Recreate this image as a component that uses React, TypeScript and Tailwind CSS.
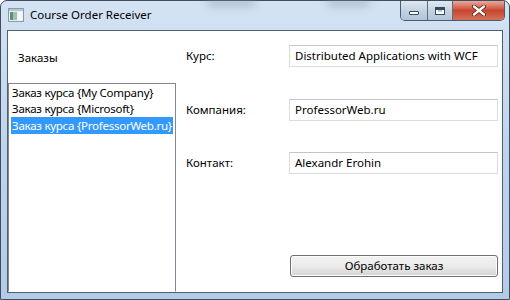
import React from "react";

const orders = [
  "Заказ курса {My Company}",
  "Заказ курса {Microsoft}",
  "Заказ курса {ProfessorWeb.ru}",
];

const fields = [
  { label: "Курс:", value: "Distributed Applications with WCF", gap: "mt-0" },
  { label: "Компания:", value: "ProfessorWeb.ru", gap: "mt-[32px]" },
  { label: "Контакт:", value: "Alexandr Erohin", gap: "mt-[31px]" },
];

function AppIcon() {
  return (
    <svg width="16" height="14" viewBox="0 0 16 14" className="shrink-0">
      <rect x="0.5" y="0.5" width="15" height="13" fill="#e8eef2" stroke="#8a9aa6" />
      <rect x="1" y="1" width="14" height="2" fill="#b8c6d0" />
      <rect x="2" y="4" width="3" height="8" fill="#5f8f7a" />
      <rect x="5" y="4" width="4" height="8" fill="#9fc2b0" />
      <rect x="10" y="4" width="4" height="8" fill="#f5f8fa" />
    </svg>
  );
}

function CaptionButtons() {
  return (
    <div className="flex h-[20px] overflow-hidden rounded-b-[5px] border border-t-0 border-[#4b5a6c] shadow-[inset_0_1px_0_rgba(255,255,255,0.6)]">
      <div className="flex w-[27px] items-center justify-center border-r border-[#5d6c7e] bg-gradient-to-b from-[#dfe8f2] via-[#c4d3e3] to-[#b1c4d9]">
        <div className="mt-[4px] h-[4px] w-[10px] rounded-[1px] border border-[#364a5e] bg-white" />
      </div>
      <div className="flex w-[25px] items-center justify-center border-r border-[#5d6c7e] bg-gradient-to-b from-[#dfe8f2] via-[#c4d3e3] to-[#b1c4d9]">
        <div className="h-[8px] w-[10px] border border-[#364a5e] bg-white shadow-[inset_0_2px_0_#364a5e]">
          <div className="mx-auto mt-[2px] h-[2px] w-[4px] bg-[#b9c9da]" />
        </div>
      </div>
      <div className="flex w-[51px] items-center justify-center bg-gradient-to-b from-[#e9a99c] via-[#c9462f] to-[#d0705a]">
        <svg width="14" height="11" viewBox="0 0 14 11">
          <path d="M2 1.5 L12 9.5 M12 1.5 L2 9.5" stroke="#5a1a10" strokeWidth="4" strokeLinecap="round" />
          <path d="M2 1.5 L12 9.5 M12 1.5 L2 9.5" stroke="#ffffff" strokeWidth="2.4" strokeLinecap="round" />
        </svg>
      </div>
    </div>
  );
}

export default function App() {
  return (
    <div className="h-[300px] w-[510px] overflow-hidden bg-white font-['Noto_Sans',sans-serif] text-[11.5px] text-black">
      <div className="relative flex h-full w-full flex-col rounded-t-[7px] border border-[#3e4d5f] bg-gradient-to-b from-[#d4e3f3] via-[#bfd4ec] to-[#b4cbe6]">
        {/* blurred desktop content behind the glass */}
        <div className="pointer-events-none absolute left-[205px] top-[-4px] h-[10px] w-[50px] rounded-full bg-[#7f93a8] opacity-40 blur-[4px]" />
        <div className="pointer-events-none absolute left-[325px] top-[-4px] h-[10px] w-[45px] rounded-full bg-[#7f93a8] opacity-40 blur-[4px]" />
        <div className="relative flex h-[29px] shrink-0 items-start">
          <div className="flex items-center gap-[6px] pl-[7px] pt-[7px]">
            <AppIcon />
            <span className="leading-[14px]">Course Order Receiver</span>
          </div>
          <div className="ml-auto mr-[4px]">
            <CaptionButtons />
          </div>
        </div>
        <div className="relative flex min-h-0 flex-1 px-[6px] pb-[6px]">
          <div className="flex flex-1 border border-[#4f5f72] bg-white">
            <div className="flex w-[168px] shrink-0 flex-col">
              <div className="flex h-[52px] items-center pl-[10px] pt-[2px]">Заказы</div>
              <div className="flex-1 border border-r-[#828790] border-t-[#828790] border-b-transparent border-l-[#828790] pl-[2px] pt-[1px] tracking-[-0.25px]">
                {orders.map((order, i) => (
                  <div
                    key={order}
                    className={
                      i === 2
                        ? "h-[17px] w-fit whitespace-nowrap bg-[#3399ff] pl-[1px] pr-[1px] leading-[17px] text-white"
                        : "h-[16px] whitespace-nowrap pl-[1px] leading-[16px]"
                    }
                  >
                    {order}
                  </div>
                ))}
              </div>
            </div>
            <div className="flex flex-1 flex-col pb-[15px] pl-[10px] pr-[4px] pt-[14px]">
              {fields.map((f) => (
                <div key={f.label} className={`flex h-[22px] items-center ${f.gap}`}>
                  <span className="w-[103px] shrink-0">{f.label}</span>
                  <div className="flex h-full flex-1 items-center border border-[#dadde2] border-t-[#c2c6cc] px-[5px]">
                    {f.value}
                  </div>
                </div>
              ))}
              <button className="ml-auto mt-auto h-[22px] w-[208px] rounded-[3px] border border-[#707070] bg-gradient-to-b from-[#f2f2f2] via-[#ebebeb] to-[#d4d4d4] text-[11.5px] shadow-[inset_0_0_0_1px_#fcfcfc]">
                Обработать заказ
              </button>
            </div>
          </div>
        </div>
      </div>
    </div>
  );
}
